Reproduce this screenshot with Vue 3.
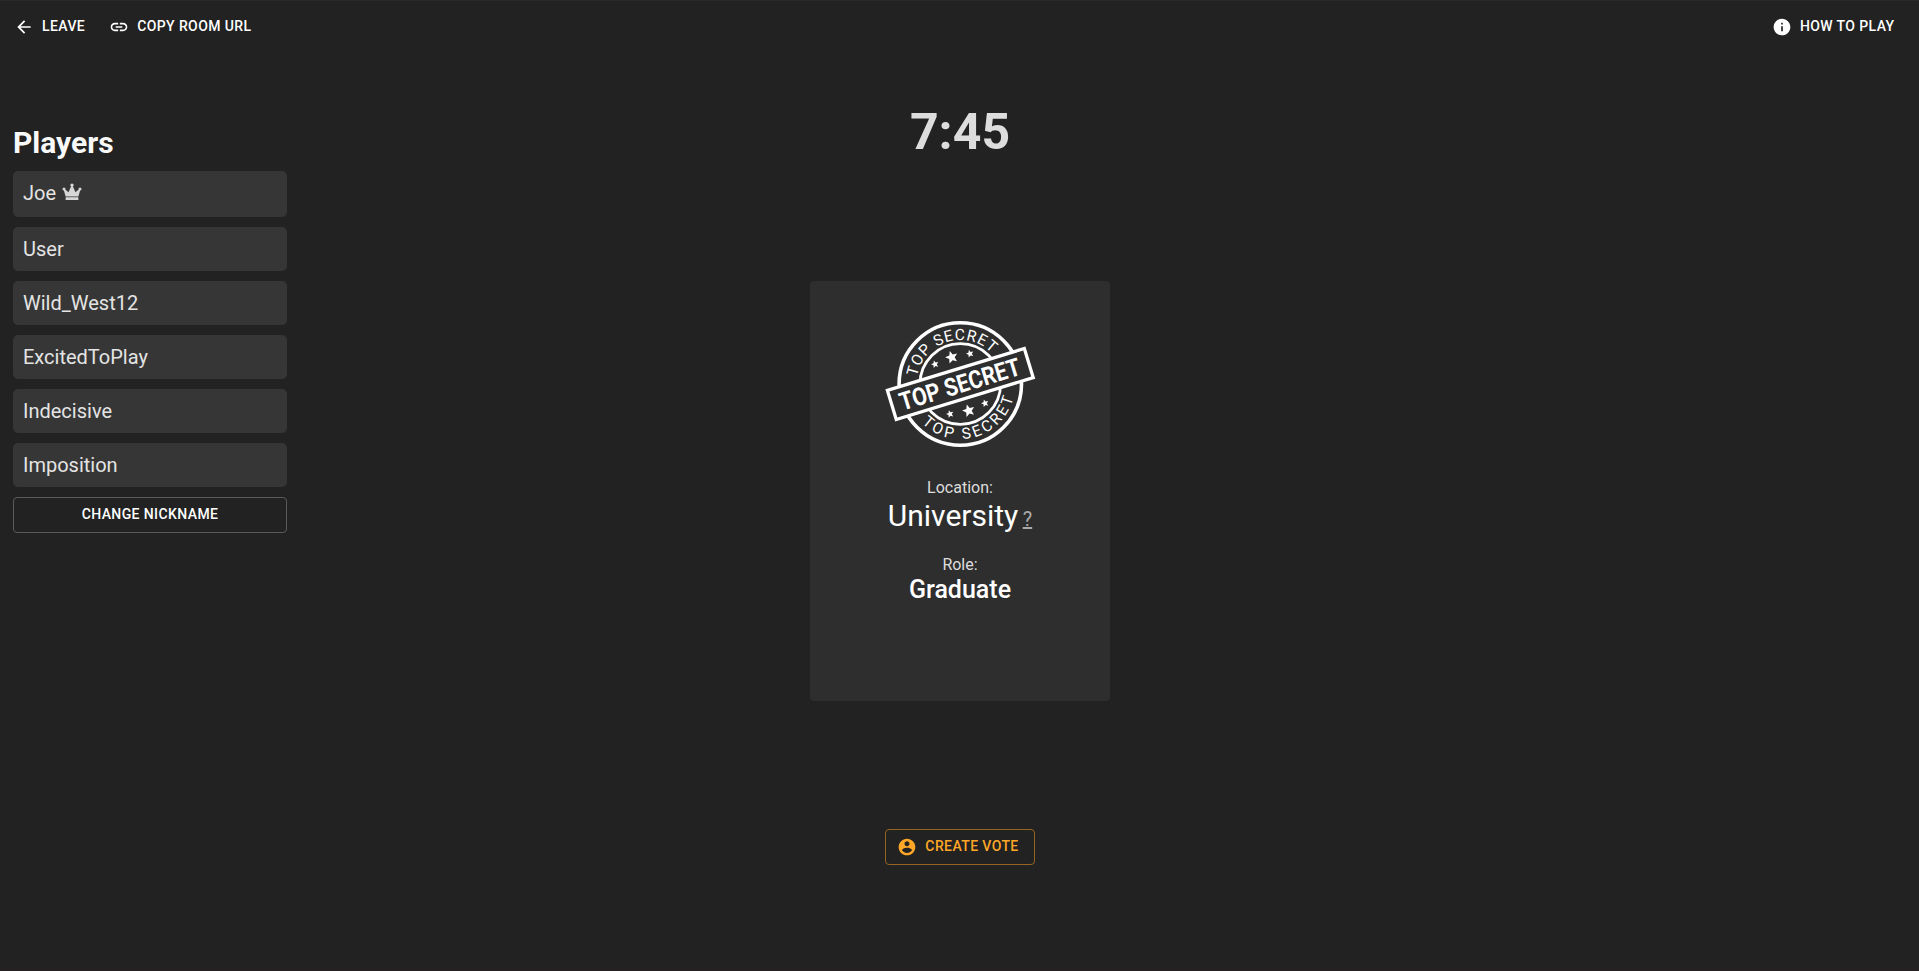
<script setup>
const players = [
  { name: 'Joe', host: true },
  { name: 'User' },
  { name: 'Wild_West12' },
  { name: 'ExcitedToPlay' },
  { name: 'Indecisive' },
  { name: 'Imposition' },
]

function starPoints(cx, cy, r) {
  return Array.from({ length: 10 }, (_, i) => {
    const radius = i % 2 ? r * 0.45 : r
    const angle = ((i * 36 - 107) * Math.PI) / 180
    return `${(cx + radius * Math.cos(angle)).toFixed(2)},${(cy + radius * Math.sin(angle)).toFixed(2)}`
  }).join(' ')
}

const stars = [
  [50, 43.3, 4], [66.7, 36.3, 6.6], [85, 32.7, 4],
  [65, 93, 4], [83.7, 89.7, 6.6], [100, 82.3, 4],
].map((s) => starPoints(...s))
</script>

<template>
  <div class="page">
    <header class="toolbar">
      <button class="btn">
        <svg class="icon" viewBox="0 0 24 24"><path d="M20 11H7.83l5.59-5.59L12 4l-8 8 8 8 1.41-1.41L7.83 13H20v-2z" /></svg>
        Leave
      </button>
      <button class="btn">
        <svg class="icon" viewBox="0 0 24 24"><path d="M3.9 12c0-1.71 1.39-3.1 3.1-3.1h4V7H7c-2.76 0-5 2.24-5 5s2.24 5 5 5h4v-1.9H7c-1.71 0-3.1-1.39-3.1-3.1zM8 13h8v-2H8v2zm9-6h-4v1.9h4c1.71 0 3.1 1.39 3.1 3.1s-1.39 3.1-3.1 3.1h-4V17h4c2.76 0 5-2.24 5-5s-2.24-5-5-5z" /></svg>
        Copy room URL
      </button>
      <button class="btn help">
        <svg class="icon" viewBox="0 0 24 24"><path d="M12 2C6.48 2 2 6.48 2 12s4.48 10 10 10 10-4.48 10-10S17.52 2 12 2zm1 15h-2v-6h2v6zm0-8h-2V7h2v2z" /></svg>
        How to play
      </button>
    </header>

    <main class="room">
      <aside class="sidebar">
        <h2 class="heading">Players</h2>
        <ul class="players">
          <li v-for="p in players" :key="p.name" class="player" :class="{ host: p.host }">
            {{ p.name }}
            <svg v-if="p.host" class="crown" viewBox="0 0 20 18">
              <path d="M3.6 13.4 1.6 6.4 2.4 5.8 6.5 9.2 9.4 2.8h1.2l2.9 6.4 4.1-3.4.8.6-2 7z" />
              <rect x="3.6" y="14.2" width="12.8" height="2.8" rx=".5" />
              <circle cx="2" cy="5.9" r="1.5" /><circle cx="10" cy="2.1" r="1.7" /><circle cx="18" cy="5.9" r="1.5" />
            </svg>
          </li>
        </ul>
        <button class="btn outlined">Change nickname</button>
      </aside>

      <section class="stage">
        <div class="timer">7:45</div>
        <div class="card">
          <svg class="stamp" viewBox="0 0 150 126">
            <defs>
              <path id="arc-top" d="M31.3 63A44 44 0 0 1 119.3 63" />
              <path id="arc-bottom" d="M20.3 63A55 55 0 0 0 130.3 63" />
            </defs>
            <circle class="line" cx="75.3" cy="63" r="61.2" stroke-width="3.6" />
            <circle class="line" cx="75.3" cy="63" r="40.3" stroke-width="2.8" />
            <polygon v-for="(s, i) in stars" :key="i" class="ink" :points="s" />
            <g transform="rotate(-17 75.3 63)">
              <text class="ink arc top"><textPath href="#arc-top" startOffset="50%">TOP SECRET</textPath></text>
              <text class="ink arc bottom"><textPath href="#arc-bottom" startOffset="50%">TOP SECRET</textPath></text>
              <rect class="line band" x="3.7" y="47.8" width="143.2" height="30.4" stroke-width="3.3" />
              <text class="ink title" x="74.7" y="71.8" text-anchor="middle" textLength="125" lengthAdjust="spacingAndGlyphs">TOP SECRET</text>
            </g>
          </svg>
          <div class="label">Location:</div>
          <div class="location">University <span class="hint">?</span></div>
          <div class="label second">Role:</div>
          <div class="role">Graduate</div>
        </div>
        <button class="btn outlined vote">
          <svg class="icon" viewBox="0 0 24 24"><path d="M12 2C6.48 2 2 6.48 2 12s4.48 10 10 10 10-4.48 10-10S17.52 2 12 2zm0 3c1.66 0 3 1.34 3 3s-1.34 3-3 3-3-1.34-3-3 1.34-3 3-3zm0 14.2c-2.5 0-4.71-1.28-6-3.22.03-1.99 4-3.08 6-3.08 1.99 0 5.97 1.09 6 3.08-1.29 1.94-3.5 3.22-6 3.22z" /></svg>
          Create vote
        </button>
      </section>
    </main>
  </div>
</template>

<style>
body { background: #222; }
</style>

<style scoped>
.page {
  box-sizing: border-box;
  height: 971px;
  overflow: hidden;
  background: #222;
  border-top: 1px solid #292929;
  border-bottom: 2px solid #252022;
  color: #fff;
  font-family: Roboto, "Liberation Sans", sans-serif;
}
.toolbar {
  display: flex;
  gap: 12px;
  height: 51px;
  padding: 0 16.5px 0 10px;
  align-items: center;
}
.btn {
  display: flex;
  align-items: center;
  justify-content: center;
  box-sizing: border-box;
  height: 36px;
  padding: 0 8px 2px;
  border: 0;
  border-radius: 4px;
  background: none;
  color: #fff;
  font: 500 14px/24px Roboto, "Liberation Sans", sans-serif;
  letter-spacing: 0.4px;
  text-transform: uppercase;
  white-space: nowrap;
}
.icon {
  width: 20px;
  height: 20px;
  margin: 2px 8px 0 -4px;
  fill: currentColor;
}
.help { margin-left: auto; }
.room {
  display: grid;
  grid-template-columns: 274px 300px 274px;
  justify-content: space-between;
  padding: 2px 12px 0 13px;
}
.sidebar { padding-top: 71px; }
.heading {
  margin: 0 0 11px;
  font-size: 30px;
  line-height: 35px;
  font-weight: 700;
  color: #f8f8f8;
}
.players {
  display: grid;
  gap: 10px;
  margin: 0 0 10px;
  padding: 0;
  list-style: none;
}
.player {
  box-sizing: border-box;
  height: 44px;
  padding: 0 10px;
  border-radius: 5px;
  background: #363636;
  color: #e4e4e4;
  font-size: 20px;
  line-height: 44px;
}
.host { height: 46px; }
.crown {
  width: 20px;
  height: 18px;
  margin-left: 1px;
  vertical-align: -1px;
  fill: #d6d6d6;
}
.outlined {
  width: 100%;
  border: 1px solid #5a5a5a;
}
.stage {
  display: flex;
  flex-direction: column;
  align-items: center;
}
.timer {
  margin-top: 49px;
  color: #ddd;
  font-size: 50px;
  line-height: 59px;
  font-weight: 700;
}
.card {
  display: flex;
  flex-direction: column;
  align-items: center;
  box-sizing: border-box;
  width: 300px;
  height: 420px;
  margin-top: 119px;
  padding-top: 40px;
  border-radius: 4px;
  background: #2e2e2e;
}
.stamp {
  width: 150px;
  height: 126px;
  margin-bottom: 31px;
  overflow: visible;
}
.ink { fill: #fff; }
.line { fill: none; stroke: #fff; }
.band { fill: #2e2e2e; }
.arc { font-size: 15.5px; font-weight: 400; text-anchor: middle; }
.top { letter-spacing: 0.8px; }
.bottom { letter-spacing: 2.9px; }
.title { font-size: 25px; font-weight: 700; }
.label {
  color: #ddd;
  font-size: 16px;
  line-height: 19px;
}
.location {
  margin-top: 1px;
  font-size: 30px;
  line-height: 35px;
  white-space: nowrap;
}
.hint {
  margin-left: -3px;
  color: #aaa;
  font-size: 20px;
  text-decoration: underline;
}
.second { margin-top: 18px; }
.role {
  margin-top: 1px;
  font-size: 25px;
  line-height: 29px;
  font-weight: 500;
}
.vote {
  width: 150px;
  margin-top: 128px;
  border-color: #946421;
  color: #ffa726;
}
</style>
